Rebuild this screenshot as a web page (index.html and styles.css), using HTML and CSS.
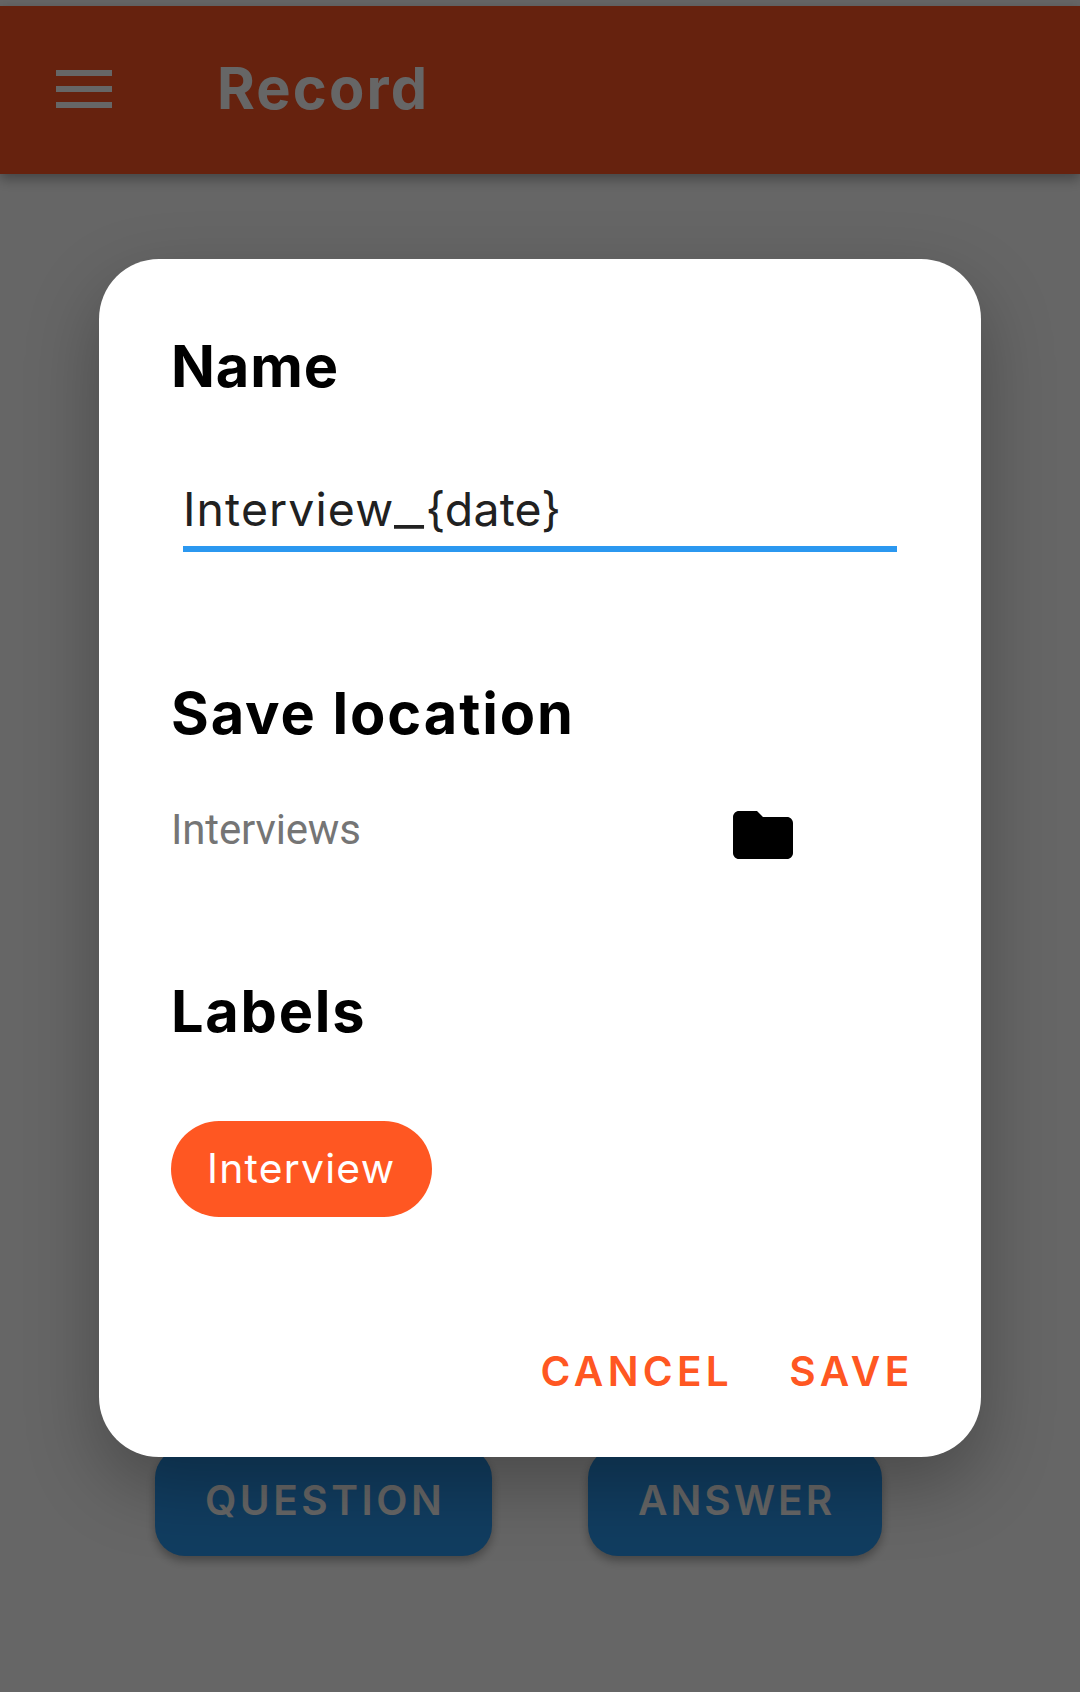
FILE: index.html
```html
<!DOCTYPE html>
<html lang="en">
<head>
<meta charset="utf-8">
<title>Record</title>
<link rel="stylesheet" href="styles.css">
</head>
<body>
<div class="screen">
  <header class="app-bar">
    <svg class="menu-icon" width="56" height="38" viewBox="0 0 56 38" aria-hidden="true">
      <path d="M0 0h56v6H0zM0 16h56v6H0zM0 32h56v6H0z" fill="currentColor"/>
    </svg>
    <h1 class="app-title">Record</h1>
  </header>
  <main class="content">
    <div class="record-actions">
      <button class="raised-button raised-button-question">QUESTION</button>
      <button class="raised-button raised-button-answer">ANSWER</button>
    </div>
  </main>
</div>

<div class="scrim">
  <section class="dialog" role="dialog">
    <h2 class="heading">Name</h2>
    <div class="name-field">Interview<span class="separator">_</span><span class="token">{date}</span></div>
    <h2 class="heading heading-location">Save location</h2>
    <div class="location-row">
      <span class="location-text">Interviews</span>
      <svg class="folder-icon" width="72" height="72" viewBox="0 0 24 24" aria-hidden="true">
        <path d="M10 4H4c-1.1 0-1.99.9-1.99 2L2 18c0 1.1.9 2 2 2h16c1.1 0 2-.9 2-2V8c0-1.1-.9-2-2-2h-8l-2-2z"/>
      </svg>
    </div>
    <h2 class="heading heading-labels">Labels</h2>
    <span class="chip">Interview</span>
    <div class="dialog-actions">
      <button class="text-button text-button-cancel">CANCEL</button>
      <button class="text-button text-button-save">SAVE</button>
    </div>
  </section>
</div>
</body>
</html>
```
FILE: styles.css
```css
* { box-sizing: border-box; }

body {
  margin: 0;
  background: #fff;
  font-family: Inter, Roboto, sans-serif;
}

button {
  border: 0;
  margin: 0;
  padding: 0;
  font-family: inherit;
}

.screen {
  display: flex;
  flex-direction: column;
  height: 1692px;
  padding-top: 6px;
}

.app-bar {
  display: flex;
  align-items: center;
  gap: 105px;
  height: 168px;
  padding: 0 0 2px 56px;
  background: #ff5525;
  color: #fff;
  box-shadow: 0 5px 12px rgba(0, 0, 0, .34);
}

.menu-icon { display: block; }

.app-title {
  margin: 0;
  padding-bottom: 2px;
  font-size: 57.7px;
  font-weight: 700;
  line-height: 72px;
  letter-spacing: 2.15px;
}

.content {
  flex: 1;
  display: flex;
  flex-direction: column;
  justify-content: flex-end;
  padding: 0 155px 136px;
}

.record-actions {
  display: flex;
  gap: 96px;
}

.raised-button {
  height: 108px;
  padding: 0 0 3px 50px;
  border-radius: 30px;
  background: #2b98f0;
  color: #fff;
  font-size: 40.6px;
  font-weight: 600;
  text-align: left;
  box-shadow: 0 5px 10px rgba(0, 0, 0, .3);
}

.raised-button-question { width: 337px; letter-spacing: 3.5px; }
.raised-button-answer { width: 294px; letter-spacing: 3px; }

/* Modal layer over the whole screen */
.scrim {
  position: absolute;
  inset: 0;
  height: 1692px;
  overflow: hidden;
  padding: 259px 99px 0;
  background: rgba(0, 0, 0, .6);
}

.dialog {
  display: flex;
  flex-direction: column;
  height: 1198px;
  padding: 71px 67px 0 72px;
  border-radius: 60px;
  background: #fff;
  box-shadow: 0 28px 72px rgba(0, 0, 0, .28);
}

.heading {
  margin: 0;
  color: #000;
  font-size: 57.7px;
  font-weight: 700;
  line-height: 72px;
  letter-spacing: .9px;
}

.heading-location { margin-top: 125px; letter-spacing: 1.92px; }
.heading-labels { margin-top: 104px; letter-spacing: 1.75px; }

.name-field {
  margin: 77px 17px 0 12px;
  padding-bottom: 7px;
  border-bottom: 6px solid #2b98f0;
  color: #212121;
  font-size: 46.4px;
  line-height: 60px;
  letter-spacing: 1.1px;
}

/* Widened underscore between the name and its date token */
.separator {
  display: inline-block;
  height: 60px;
  margin: 0 9px 0 1px;
  letter-spacing: 0;
  vertical-align: top;
  transform: translate(-1px, -1px) scaleX(1.42);
  transform-origin: left;
}

.token { letter-spacing: .2px; }

.location-row {
  display: flex;
  justify-content: space-between;
  margin-top: 50px;
  padding-right: 115px;
}

.location-text {
  color: #757575;
  font-family: Roboto, sans-serif;
  font-size: 42px;
  line-height: 62px;
  letter-spacing: -.15px;
}

.folder-icon { display: block; }

.chip {
  width: 261px;
  height: 96px;
  margin-top: 74px;
  padding-left: 36px;
  border-radius: 48px;
  background: #ff5722;
  color: #fff;
  font-size: 40.8px;
  line-height: 95px;
  letter-spacing: 1.25px;
}

.dialog-actions {
  display: flex;
  justify-content: flex-end;
  gap: 56px;
  margin-top: 131px;
}

.text-button {
  background: none;
  color: #ff5722;
  font-size: 40.6px;
  font-weight: 600;
  line-height: 48px;
}

.text-button-cancel { letter-spacing: 4.32px; }
.text-button-save { letter-spacing: 4.58px; }
```
